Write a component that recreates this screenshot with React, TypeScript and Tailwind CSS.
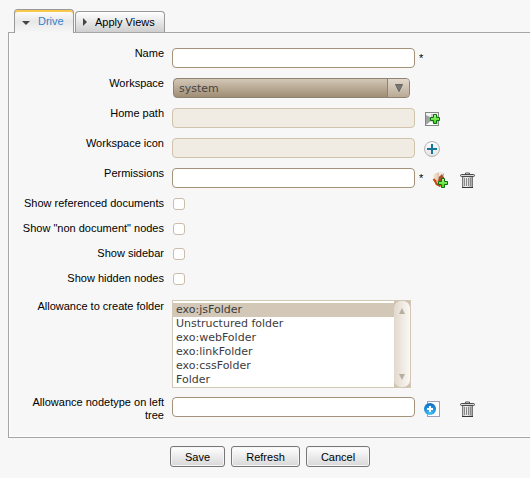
import { useState } from "react";
import type { ReactNode } from "react";

const inputStyle =
  "block h-5 w-[243px] rounded-[4px] border border-[#a3937a] bg-white px-1 font-['DejaVu_Sans',sans-serif] text-[11px] text-[#3c3c3c] outline-none disabled:border-[#cfc3ab] disabled:bg-[#f0ebe3]";

type RowProps = { label: string; id: string; size: string; flush?: boolean; children: ReactNode };

function Row({ label, id, size, flush, children }: RowProps) {
  return (
    <div className={`flex items-start gap-2 ${size}`}>
      <label htmlFor={id} className="w-[155px] shrink-0 pl-3 text-right leading-[13px]">
        {label}
      </label>
      <div className={flush ? "flex items-start" : "flex items-start pt-px"}>{children}</div>
    </div>
  );
}

function Actions({ required, spacing, children }: { required?: boolean; spacing: string; children?: ReactNode }) {
  return (
    <>
      <span className="w-[9px] shrink-0 pl-1 leading-5">{required ? "*" : ""}</span>
      <div className={`flex ${spacing}`}>{children}</div>
    </>
  );
}

function IconButton({ label, children }: { label: string; children: ReactNode }) {
  return (
    <button type="button" aria-label={label} className="block h-4 w-4">
      <svg viewBox="0 0 16 16" width="16" height="16" className="block overflow-visible">
        {children}
      </svg>
    </button>
  );
}

function GreenPlus({ x, y }: { x: number; y: number }) {
  return (
    <path
      transform={`translate(${x} ${y})`}
      d="M3.5 .5h3v3h3v3h-3v3h-3v-3h-3v-3h3z"
      fill="url(#greenPlus)"
      stroke="#08730d"
    />
  );
}

function Trash() {
  return (
    <IconButton label="Remove">
      <path d="M5.5 2.5V1h4v1.5" fill="none" stroke="#555" />
      <rect x=".5" y="2.5" width="14" height="2" rx="1" fill="#d8d8d8" stroke="#4a4a4a" />
      <path d="M2 5h11v10.5H2z" fill="url(#trash)" />
      <path d="M2.5 5v10M12.5 5v10" stroke="#777" />
      <path d="M4.5 6v8M6.5 6v8M8.5 6v8M10.5 6v8" stroke="#8a8a8a" />
      <path d="M2 15.5h11" stroke="#333" />
    </IconButton>
  );
}

function Gradients() {
  return (
    <svg width="0" height="0" className="absolute" aria-hidden="true">
      <defs>
        <linearGradient id="greenPlus" x1="0" y1="0" x2="0" y2="1">
          <stop stopColor="#b8f48e" />
          <stop offset="1" stopColor="#35d70e" />
        </linearGradient>
        <linearGradient id="trash">
          <stop stopColor="#b5b5b5" />
          <stop offset=".4" stopColor="#f4f4f4" />
          <stop offset="1" stopColor="#999" />
        </linearGradient>
        <linearGradient id="ring" x1="0" y1="0" x2="0" y2="1">
          <stop stopColor="#fff" />
          <stop offset="1" stopColor="#e2e2e2" />
        </linearGradient>
        <radialGradient id="ball" cx=".5" cy=".85" r=".85">
          <stop stopColor="#45c5fa" />
          <stop offset="1" stopColor="#0868c4" />
        </radialGradient>
        <linearGradient id="hand">
          <stop stopColor="#f6eee4" />
          <stop offset=".5" stopColor="#e5c3a8" />
          <stop offset="1" stopColor="#8a4a2c" />
        </linearGradient>
      </defs>
    </svg>
  );
}

const checks = [
  { id: "referenced", label: "Show referenced documents", size: "h-[25px]" },
  { id: "nondocument", label: 'Show "non document" nodes', size: "h-[25px]" },
  { id: "sidebar", label: "Show sidebar", size: "h-[25px]" },
  { id: "hidden", label: "Show hidden nodes", size: "h-[28px]" },
];

const folders = ["exo:jsFolder", "Unstructured folder", "exo:webFolder", "exo:linkFolder", "exo:cssFolder", "Folder"];

export default function App() {
  const [folder, setFolder] = useState(folders[0]);

  return (
    <main className="min-h-screen overflow-hidden bg-[#f7f7f7] pt-[9px] pb-2 font-['Liberation_Sans',Arial,sans-serif] text-[11px] text-black">
      <Gradients />
      <div role="tablist" className="relative z-10 -mb-px flex items-end pl-[14px]">
        <button
          type="button"
          role="tab"
          aria-selected="true"
          className="flex h-6 w-[60px] items-center rounded-t-[4px] border border-b-0 border-[#999] bg-linear-to-b from-white via-[#e8e8e8] to-[#f7f7f7] pl-[7px] text-[#3182cc] shadow-[inset_0_2px_0_#fbc949]"
        >
          <svg width="8" height="4" viewBox="0 0 8 4" className="mt-0.5 mr-2">
            <path d="M0 0h8L4 4z" fill="#444" />
          </svg>
          Drive
        </button>
        <button
          type="button"
          role="tab"
          aria-selected="false"
          className="mb-px ml-px flex h-[21px] w-[90px] items-center rounded-t-[4px] border border-b-0 border-[#999] bg-linear-to-b from-white to-[#cfcfcf] pl-[7px]"
        >
          <svg width="4" height="8" viewBox="0 0 4 8" className="mr-2">
            <path d="M0 0v8l4-4z" fill="#444" />
          </svg>
          Apply Views
        </button>
      </div>

      <form onSubmit={(e) => e.preventDefault()}>
        <section className="ml-2 border border-r-0 border-[#a5a5a5] pt-[14px] shadow-[inset_1px_-1px_0_#fff]">
          <Row id="name" label="Name" size="h-[30px]">
            <input id="name" type="text" className={inputStyle} />
            <Actions required spacing="" />
          </Row>
          <Row id="workspace" label="Workspace" size="h-[30px]">
            <div className="relative ml-px">
              <select
                id="workspace"
                className="block h-5 w-[237px] appearance-none rounded-[4px] border border-[#918371] bg-linear-to-b from-[#d3c7b7] to-[#a08e74] pt-0.5 pl-[5px] font-['DejaVu_Sans',sans-serif] text-[11px] text-[#444] outline-none"
              >
                <option>system</option>
              </select>
              <span className="pointer-events-none absolute inset-y-px right-px flex w-[22px] items-center justify-center rounded-r-[3px] border-l border-[#918371] bg-linear-to-b from-[#e2d9cd] to-[#b9aa95]">
                <svg width="8" height="8" viewBox="0 0 8 8">
                  <path d="M.5 .5h7L4 7.5z" fill="#777" stroke="#666" />
                </svg>
              </span>
            </div>
          </Row>
          <Row id="homepath" label="Home path" size="h-[30px]">
            <input id="homepath" type="text" disabled className={inputStyle} />
            <Actions spacing="pt-[3px]">
              <IconButton label="Select home path">
                <rect x="1.5" y="1.5" width="13" height="13" fill="#f4f4f4" stroke="#858585" />
                <path d="M2 4l6 3v3l-6 4z" fill="#a2a2a6" />
                <path d="M7 3h5l2 2v8H9l-2-3z" fill="#c6c6c8" />
                <path d="M2 14l5-4 4 4z" fill="#fff" />
                <GreenPlus x={6} y={3} />
              </IconButton>
            </Actions>
          </Row>
          <Row id="icon" label="Workspace icon" size="h-[30px]">
            <input id="icon" type="text" disabled className={inputStyle} />
            <Actions spacing="pt-[3px]">
              <IconButton label="Add icon">
                <circle cx="8" cy="8" r="7.5" fill="url(#ring)" stroke="#b5b5b5" />
                <path d="M8 3v10M3 8h10" stroke="#19779a" strokeWidth="2" />
              </IconButton>
            </Actions>
          </Row>
          <Row id="permissions" label="Permissions" size="h-[30px]">
            <input id="permissions" type="text" className={inputStyle} />
            <Actions required spacing="gap-3 pt-1 pl-2">
              <IconButton label="Add permission">
                <path d="M1 3l3-2 5-1 3 2v8l-4 5-3-1-4-5z" fill="url(#hand)" />
                <path d="M7 0h4l1 5-5-1z" fill="#ece9e6" />
                <path d="M10 2l2 4-3 3-3 0 1-4z" fill="#a5512d" />
                <path d="M1.5 7q2 2 3 5l4 2" fill="none" stroke="#c5430c" strokeWidth="2" />
                <path d="M3 7l4 4" stroke="#f39a50" />
                <GreenPlus x={6} y={6} />
              </IconButton>
              <Trash />
            </Actions>
          </Row>

          {checks.map((c) => (
            <Row key={c.id} id={c.id} label={c.label} size={c.size}>
              <input
                id={c.id}
                type="checkbox"
                className="ml-px block h-3 w-3 appearance-none rounded-[3px] border border-[#cbbdab] bg-white checked:bg-[#a3937a]"
              />
            </Row>
          ))}

          <Row id="folders" label="Allowance to create folder" size="h-24" flush>
            <div className="flex h-[88px] w-[239px] border border-[#d3c7b5] bg-white">
              <select
                id="folders"
                size={6}
                value={folder}
                onChange={(e) => setFolder(e.target.value)}
                className="block h-full min-w-0 flex-1 appearance-none overflow-hidden pt-0.5 font-['DejaVu_Sans',sans-serif] text-[11px] outline-none"
              >
                {folders.map((f) => (
                  <option
                    key={f}
                    className="h-[14px] min-h-0 p-0 pl-[3px] leading-[14px] text-[#3c3c3c] checked:bg-[#d3c7b7] checked:bg-linear-to-r checked:from-[#d3c7b7] checked:to-[#d3c7b7]"
                  >
                    {f}
                  </option>
                ))}
              </select>
              <div className="w-4 bg-[#cfc3ae]">
                <div className="flex h-full flex-col items-center justify-between rounded-[7px] bg-linear-to-r from-[#e2d9cd] to-[#faf8f5] py-[7px]">
                  <svg width="6" height="6" viewBox="0 0 6 6">
                    <path d="M3 0l3 6H0z" fill="#b8aea0" />
                  </svg>
                  <svg width="6" height="6" viewBox="0 0 6 6">
                    <path d="M3 6l3-6H0z" fill="#b8aea0" />
                  </svg>
                </div>
              </div>
            </div>
          </Row>
          <Row id="nodetype" label="Allowance nodetype on left tree" size="h-[41px]">
            <input id="nodetype" type="text" className={inputStyle} />
            <Actions spacing="gap-5 pt-1">
              <IconButton label="Add node type">
                <rect x="3.5" y=".5" width="12" height="15" fill="#fff" stroke="#9a9fbd" />
                <circle cx="6" cy="8" r="6" fill="url(#ball)" />
                <path d="M6 5v6M3 8h6" stroke="#fff" strokeWidth="2" />
              </IconButton>
              <Trash />
            </Actions>
          </Row>
        </section>

        <div className="flex justify-center gap-[6px] pt-2 pl-2.5">
          {[
            ["Save", "w-[55px]"],
            ["Refresh", "w-[69px]"],
            ["Cancel", "w-16"],
          ].map(([text, width]) => (
            <button
              key={text}
              type="button"
              className={`h-[21px] rounded-[3px] border border-[#777] bg-linear-to-b from-white to-[#d8d8d8] pt-0.5 shadow-[inset_0_0_0_1px_#f5f5f5] ${width}`}
            >
              {text}
            </button>
          ))}
        </div>
      </form>
    </main>
  );
}
